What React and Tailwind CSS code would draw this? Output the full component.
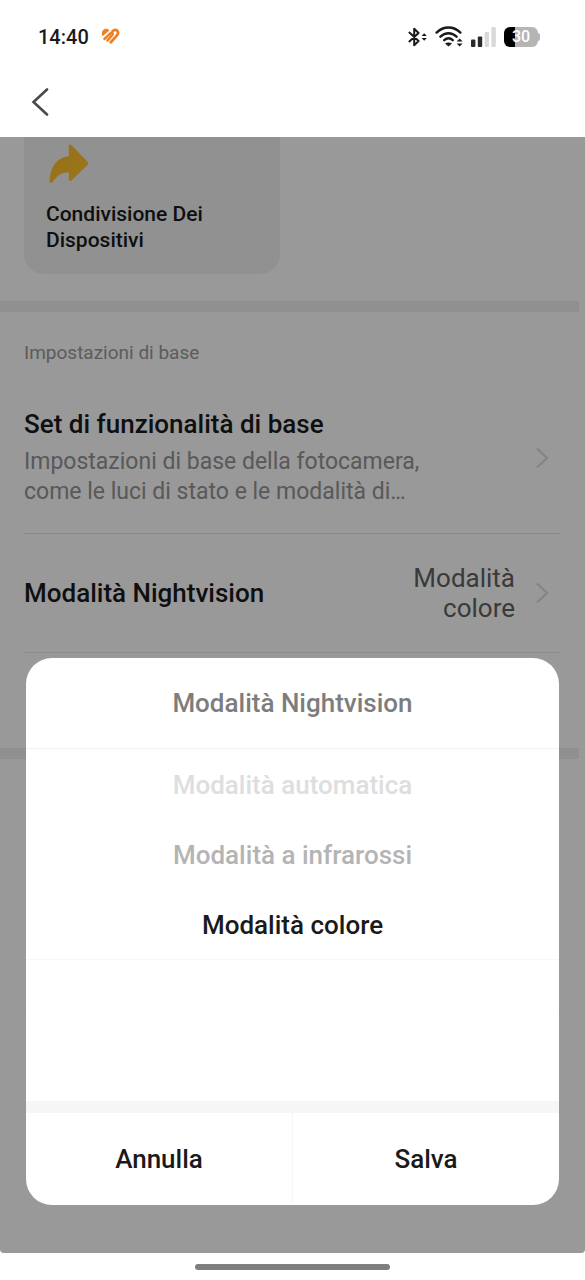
import { useState } from "react";

function BrandIcon() {
  return (
    <svg width="19" height="17" viewBox="0 0 19 17" fill="none" aria-hidden="true">
      <path
        d="M8.400 2.600C7 .4 4 .2 2.200 2.100.4 4 .3 6.600 1.600 8.200Z"
        fill="#ee8026"
      />
      <path
        d="M3.400 11 9.600 5.200c1.300-1.200 2.900.3 1.900 1.600L6.400 12.600"
        stroke="#ee8026"
        strokeWidth="2.400"
        strokeLinecap="round"
        strokeLinejoin="round"
      />
      <path
        d="M9.800 14.200 16 7.400c1.500-1.700 1.300-3.700.1-4.700-1.300-1.100-3.200-.8-4.500.6"
        stroke="#ee8026"
        strokeWidth="2.800"
        strokeLinecap="round"
      />
    </svg>
  );
}

function BluetoothIcon() {
  return (
    <svg width="20" height="20" viewBox="0 0 20 20" fill="none" stroke="#1a1a1a" strokeWidth="2" strokeLinejoin="round" strokeLinecap="round" aria-hidden="true">
      <path d="M2.400 5.600 11.600 14 7.200 18.200V1.800L11.600 6 2.400 14.400" />
      <path d="M14.600 9 17.200 6.200 19.800 9ZM14.600 11 17.200 13.800 19.800 11Z" fill="#1a1a1a" stroke="none" />
    </svg>
  );
}

function WifiIcon() {
  return (
    <svg width="28" height="21" viewBox="0 0 28 21" fill="none" stroke="#1a1a1a" strokeWidth="2.400" strokeLinecap="round" aria-hidden="true">
      <path d="M1.600 6.600C8.600 -.2 18.400 -.2 25.400 6.600" />
      <path d="M5.400 10.700c4.800-4.600 11.400-4.600 16.200 0" />
      <path d="M9.200 14.200c2.600-2.300 6-2.300 8.600 0" />
      <path d="M10 17.600c2.200-1.600 4.800-1.600 7 0L13.500 20.600Z" fill="#1a1a1a" stroke="none" />
      <path d="M21.600 15.600 24.600 12.600 27.600 15.600ZM21.600 17.400 24.600 20.400 27.600 17.400Z" fill="#1a1a1a" stroke="none" />
    </svg>
  );
}

function SignalIcon() {
  return (
    <svg width="25" height="20" viewBox="0 0 25 20" aria-hidden="true">
      <rect x="0" y="12.5" width="4.4" height="7.5" rx="1" fill="#2a2a2a" />
      <rect x="6.8" y="9.5" width="4.4" height="10.5" rx="1" fill="#2a2a2a" />
      <rect x="13.6" y="5" width="4.4" height="15" rx="1" fill="#d9d9d9" />
      <rect x="20.4" y="0" width="4.4" height="20" rx="1" fill="#d9d9d9" />
    </svg>
  );
}

function Battery() {
  return (
    <div className="flex items-center" aria-label="Batteria 30%">
      <div className="flex h-5 w-[34px] items-center justify-center rounded-md bg-linear-to-r from-black from-33% to-[#b5b5b5] to-33% text-base font-medium leading-5 text-white">
        30
      </div>
      <div className="h-2 w-0.5 rounded-r bg-[#b5b5b5]" />
    </div>
  );
}

function ShareArrow() {
  return (
    <svg width="40" height="40" viewBox="0 0 40 40" aria-hidden="true">
      <defs>
        <linearGradient id="arrow" x1="0" y1="0" x2="1" y2="1">
          <stop offset="0" stopColor="#ffb726" />
          <stop offset="1" stopColor="#ffc832" />
        </linearGradient>
      </defs>
      <path
        d="M19.800 2c0-1.600 1.400-2 2.400-1L38.800 18c.9 1 .9 1.800 0 2.700L22.200 36.700c-1 1-2.400.5-2.400-.9v-7.500C13 28.600 8.500 31 3.600 38c-1 1.500-3 1.100-3-.8C1 24 7.500 13 19.800 12.200Z"
        fill="url(#arrow)"
      />
    </svg>
  );
}

function Chevron() {
  return (
    <svg width="14" height="22" viewBox="0 0 14 22" fill="none" stroke="#dcdcdc" strokeWidth="2.2" className="shrink-0" aria-hidden="true">
      <path d="M2 1.500 12 11 2 20.500" />
    </svg>
  );
}

const options = [
  { label: "Modalità automatica", color: "text-[#dedede]" },
  { label: "Modalità a infrarossi", color: "text-[#b4b4b4]" },
  { label: "Modalità colore", color: "text-[#1a1a1a]" },
];

function NightvisionDialog() {
  const [selected, setSelected] = useState("Modalità colore");
  return (
    <section role="dialog" aria-modal="true" aria-labelledby="dialog-title" className="w-full overflow-hidden rounded-[26px] bg-white text-[26px] font-medium leading-8">
      <h2 id="dialog-title" className="flex h-[91px] items-center justify-center border-b border-[#f2f2f2] text-[#7d7d7d]">
        Modalità Nightvision
      </h2>
      <div role="listbox" aria-label="Modalità" className="h-[352px]">
        {options.map(({ label, color }) => (
          <button
            key={label}
            type="button"
            role="option"
            aria-selected={selected === label}
            onClick={() => setSelected(label)}
            className={`flex h-[70px] w-full items-center justify-center border-[#f7f7f7] pt-0.5 last:h-[71px] last:border-b ${color}`}
          >
            {label}
          </button>
        ))}
      </div>
      <div className="flex border-t-[12px] border-[#f6f6f6] text-[#1a1a1a]">
        <button type="button" className="h-[92px] flex-1 border-r border-[#f7f7f7]">Annulla</button>
        <button type="button" className="h-[92px] flex-1">Salva</button>
      </div>
    </section>
  );
}

export default function App() {
  return (
    <div className="flex min-h-screen flex-col bg-white font-['Roboto',sans-serif] text-[#1a1a1a]">
      <div className="flex h-[73px] items-center justify-between pl-[38px] pr-[45px]">
        <div className="flex items-center gap-3">
          <span className="text-xl font-medium">14:40</span>
          <BrandIcon />
        </div>
        <div className="flex items-center gap-2">
          <BluetoothIcon />
          <WifiIcon />
          <SignalIcon />
          <Battery />
        </div>
      </div>
      <header className="flex h-16 items-start px-6 pt-3">
        <button type="button" aria-label="Indietro" className="flex size-8 items-center justify-center">
          <svg width="18" height="30" viewBox="0 0 18 30" fill="none" stroke="#4a4a4a" strokeWidth="2.6" strokeLinecap="round" aria-hidden="true">
            <path d="M16 3.500 2.500 16 16 28.500" />
          </svg>
        </button>
      </header>

      <main className="relative flex-1">
        <div className="px-6">
          <button type="button" className="flex h-[137px] w-64 flex-col items-start rounded-b-[20px] bg-[#f2f2f2] pl-[22px] pt-[7px] text-left">
            <span className="pl-[3px]"><ShareArrow /></span>
            <span className="pt-[17px] text-[21px] font-medium leading-[26px]">
              Condivisione Dei<br />Dispositivi
            </span>
          </button>
        </div>
        <div className="mr-1.5 mt-[27px] h-[11px] bg-[#f1f1f1]" />

        <div className="px-6">
          <h3 className="pt-[29px] text-[19px] leading-6 text-[#9a9a9a]">Impostazioni di base</h3>
          <a href="#base" className="mt-[43px] flex items-center justify-between border-b border-[#e6e6e6] pb-[26px] pr-3">
            <span className="w-[420px]">
              <span className="block text-[26px] font-medium leading-8">Set di funzionalità di base</span>
              <span className="block pt-[7px] text-[23px] leading-[30px] text-[#949494]">
                Impostazioni di base della fotocamera, come le luci di stato e le modalità di…
              </span>
            </span>
            <Chevron />
          </a>
          <a href="#nightvision" className="flex h-[119px] items-center border-b border-[#e6e6e6] pr-3">
            <span className="flex-1 text-[26px] font-medium leading-8">Modalità Nightvision</span>
            <span className="w-[130px] pr-5 text-right text-[26px] leading-[30px] text-[#616161]">Modalità colore</span>
            <Chevron />
          </a>
        </div>
        <div className="mr-1.5 mt-[95px] h-[11px] bg-[#f1f1f1]" />
        <hr className="mx-6 mt-[253px] border-[#f5f5f5]" />

        <div className="absolute inset-0 flex items-end rounded-b bg-black/40 px-[26px] pb-12">
          <NightvisionDialog />
        </div>
      </main>

      <footer className="flex h-[27px] items-center justify-center">
        <div className="h-1.5 w-1/3 rounded-full bg-[#7f7f7f]" />
      </footer>
    </div>
  );
}
